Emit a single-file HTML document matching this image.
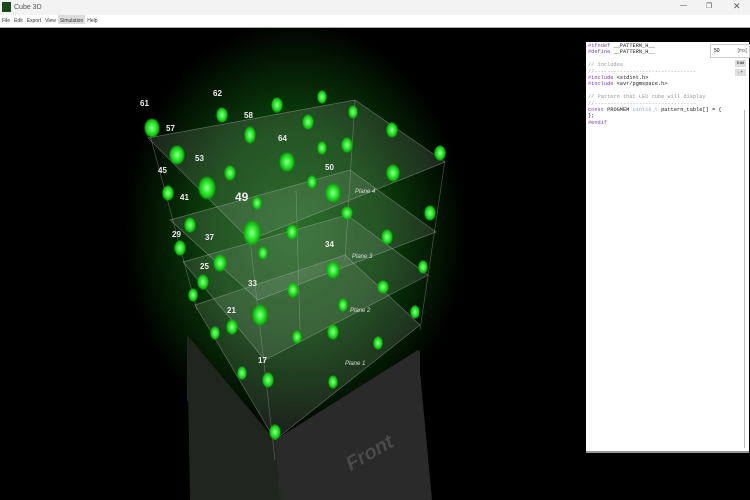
<!DOCTYPE html>
<html><head><meta charset="utf-8"><style>
body{margin:0;width:750px;height:500px;overflow:hidden;background:#000;font-family:"Liberation Sans",sans-serif;position:relative}
#title{position:absolute;left:0;top:0;width:750px;height:15px;background:#f3f3f3;font-size:7px;color:#555}
#menu{position:absolute;left:0;top:15px;width:750px;height:12px;background:#fff;font-size:5px;color:#333;border-bottom:1px solid #aaa}
#menu span{display:inline-block;padding:3px 2px 0}
#panel{position:absolute;left:586px;top:42px;width:163px;height:409px;background:#fff;border-bottom:2px solid #999}
pre{margin:0;position:absolute;left:2px;top:1px;font-family:"Liberation Mono",monospace;font-size:5.3px;line-height:6.4px;color:#222}
.k{color:#7a3fb0}.c{color:#999}.t{color:#9ab}
</style></head><body>
<div id="title"><span style="position:absolute;left:2px;top:2px;width:9px;height:10px;background:#1a4a1a"></span><span style="position:absolute;left:14px;top:4px">Cube 3D</span>
<span style="position:absolute;left:680px;top:2px">—</span><span style="position:absolute;left:706px;top:2px">❐</span><span style="position:absolute;left:733px;top:1px;font-size:9px">✕</span></div>
<div id="menu"><span>File</span><span>Edit</span><span>Export</span><span>View</span><span style="background:#ddd">Simulation</span><span>Help</span></div>
<svg width="750" height="500" style="position:absolute;left:0;top:0" viewBox="0 0 750 500">
<defs><radialGradient id="g" cx="295" cy="230" r="190" gradientUnits="userSpaceOnUse" gradientTransform="translate(295 230) scale(0.9 1.1) translate(-295 -230)"><stop offset="0" stop-color="#136013"/><stop offset="0.5" stop-color="#0c400c"/><stop offset="0.8" stop-color="#041a04"/><stop offset="1" stop-color="#000"/></radialGradient>
<radialGradient id="l"><stop offset="0" stop-color="#9f9"/><stop offset="0.45" stop-color="#3e3"/><stop offset="0.8" stop-color="#1b1"/><stop offset="1" stop-color="#0a0" stop-opacity="0.2"/></radialGradient></defs>
<rect x="0" y="28" width="586" height="472" fill="url(#g)"/>
<polygon points="187,335 275,440 420,350 420,500 270,500 187,400" fill="#262a26"/>
<polygon points="187,335 275,440 280,500 190,500" fill="#1e261e"/>
<polygon points="275,440 418,350 432,500 282,500" fill="#2a2a2a"/>
<text x="345" y="470" fill="#4a4a4a" font-size="20" font-weight="bold" font-style="italic" transform="rotate(-30 350 460)">Front</text>
<g fill="#9a9" fill-opacity="0.18" stroke="#ccc" stroke-opacity="0.4" stroke-width="0.7">
<polygon points="195,305 345,255 420,325 275,440"/>
<polygon points="183,262 347,215 428,275 265,360"/>
<polygon points="170,220 350,170 436,232 258,300"/>
<polygon points="148,138 355,100 445,162 250,240"/>
</g>
<g stroke="#aaa" stroke-opacity="0.5" stroke-width="0.6">
<line x1="150" y1="135" x2="197" y2="310"/><line x1="250" y1="240" x2="275" y2="460"/><line x1="445" y1="160" x2="420" y2="330"/><line x1="355" y1="100" x2="345" y2="260"/><line x1="296" y1="190" x2="300" y2="330"/></g>
<g fill="#ddd" font-size="6" font-style="italic"><text x="355" y="193">Plane 4</text><text x="352" y="258">Plane 3</text><text x="350" y="312">Plane 2</text><text x="345" y="365">Plane 1</text></g>
<g fill="#eee" font-weight="bold" font-size="8"><text x="140" y="106">61</text><text x="213" y="96">62</text><text x="166" y="131">57</text><text x="244" y="118">58</text><text x="195" y="161">53</text><text x="278" y="141">64</text><text x="235" y="201" font-size="12">49</text><text x="325" y="170">50</text><text x="205" y="240">37</text><text x="248" y="286">33</text><text x="258" y="363">17</text><text x="158" y="173">45</text><text x="180" y="200">41</text><text x="172" y="237">29</text><text x="200" y="269">25</text><text x="227" y="313">21</text><text x="325" y="247">34</text></g>
<g fill="url(#l)">
<ellipse cx="152" cy="128" rx="8" ry="10"/><ellipse cx="222" cy="115" rx="6" ry="8"/><ellipse cx="277" cy="105" rx="6" ry="8"/><ellipse cx="322" cy="97" rx="5" ry="7"/><ellipse cx="353" cy="112" rx="5" ry="7"/><ellipse cx="308" cy="122" rx="6" ry="8"/><ellipse cx="250" cy="135" rx="6" ry="9"/><ellipse cx="177" cy="155" rx="8" ry="10"/><ellipse cx="392" cy="130" rx="6" ry="8"/><ellipse cx="440" cy="153" rx="6" ry="8"/><ellipse cx="347" cy="145" rx="6" ry="8"/><ellipse cx="287" cy="162" rx="8" ry="10"/><ellipse cx="322" cy="148" rx="5" ry="7"/><ellipse cx="230" cy="173" rx="6" ry="8"/><ellipse cx="207" cy="188" rx="9" ry="12"/><ellipse cx="168" cy="193" rx="6" ry="8"/><ellipse cx="393" cy="173" rx="7" ry="9"/><ellipse cx="333" cy="193" rx="8" ry="10"/><ellipse cx="312" cy="182" rx="5" ry="7"/><ellipse cx="257" cy="203" rx="5" ry="7"/><ellipse cx="190" cy="225" rx="6" ry="8"/><ellipse cx="252" cy="233" rx="9" ry="13"/><ellipse cx="430" cy="213" rx="6" ry="8"/><ellipse cx="387" cy="237" rx="6" ry="8"/><ellipse cx="292" cy="232" rx="6" ry="8"/><ellipse cx="347" cy="213" rx="6" ry="7"/><ellipse cx="180" cy="248" rx="6" ry="8"/><ellipse cx="220" cy="263" rx="7" ry="9"/><ellipse cx="333" cy="270" rx="7" ry="9"/><ellipse cx="263" cy="253" rx="5" ry="7"/><ellipse cx="423" cy="267" rx="5" ry="7"/><ellipse cx="383" cy="287" rx="6" ry="7"/><ellipse cx="203" cy="282" rx="6" ry="8"/><ellipse cx="193" cy="295" rx="5" ry="7"/><ellipse cx="293" cy="290" rx="6" ry="8"/><ellipse cx="260" cy="315" rx="8" ry="11"/><ellipse cx="232" cy="327" rx="6" ry="8"/><ellipse cx="215" cy="333" rx="5" ry="7"/><ellipse cx="297" cy="337" rx="5" ry="7"/><ellipse cx="333" cy="332" rx="6" ry="8"/><ellipse cx="378" cy="343" rx="5" ry="7"/><ellipse cx="343" cy="305" rx="5" ry="7"/><ellipse cx="415" cy="312" rx="5" ry="7"/><ellipse cx="242" cy="373" rx="5" ry="7"/><ellipse cx="268" cy="380" rx="6" ry="8"/><ellipse cx="333" cy="382" rx="5" ry="7"/><ellipse cx="275" cy="432" rx="6" ry="8"/>
</g>
</svg>
<div id="panel"><pre><span class="k">#ifndef</span> __PATTERN_H__
<span class="k">#define</span> __PATTERN_H__

<span class="c">// includes
//--------------------------------</span>
<span class="k">#include</span> &lt;stdint.h&gt;
<span class="k">#include</span> &lt;avr/pgmspace.h&gt;

<span class="c">// Pattern that LED cube will display
//--------------------------------</span>
<span class="k">const</span> PROGMEM <span class="t">uint16_t</span> pattern_table[] = {
};
<span class="k">#endif</span></pre>
<div style="position:absolute;left:124px;top:2px;width:38px;height:12px;border:1px solid #ccc;font-size:5px;background:#fff"><span style="position:absolute;left:3px;top:3px">50</span><span style="position:absolute;right:2px;top:3px;color:#666">[ms]</span></div>
<div style="position:absolute;left:149px;top:18px;width:11px;height:7px;background:#ddd;font-size:4px;text-align:center">Edit</div>
<div style="position:absolute;left:149px;top:27px;width:11px;height:7px;background:#ddd;font-size:4px;text-align:center">- +</div>
<div style="position:absolute;left:158px;top:68px;width:4px;height:338px;border-left:1px solid #bbb"></div>
</div>
</body></html>
